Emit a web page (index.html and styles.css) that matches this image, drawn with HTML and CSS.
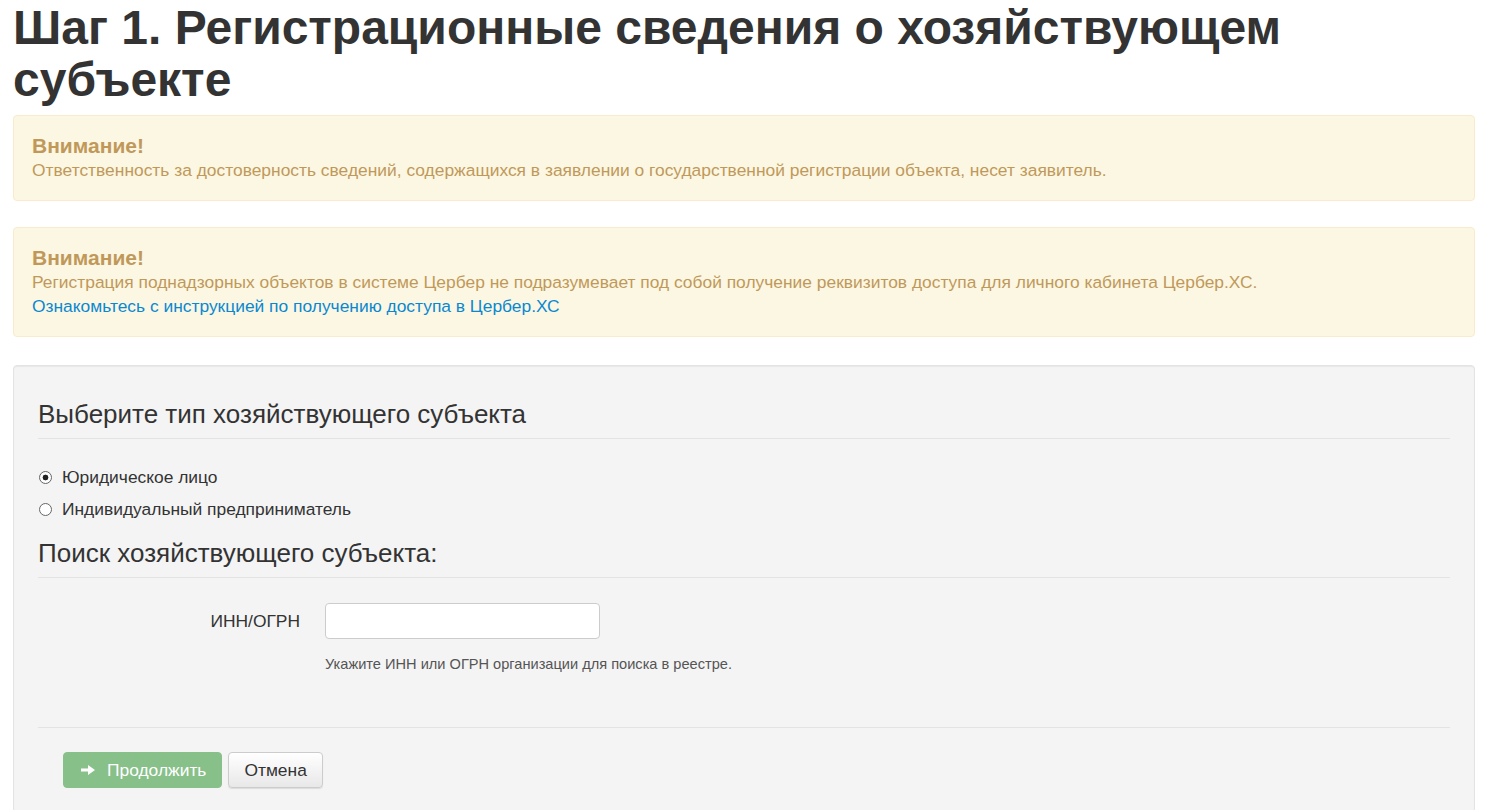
FILE: index.html
```html
<!DOCTYPE html>
<html lang="ru">
<head>
    <meta charset="UTF-8">
    <title>Шаг 1. Регистрационные сведения о хозяйствующем субъекте</title>
    <link rel="stylesheet" href="styles.css">
</head>
<body>
    <div class="page">
        <h1>Шаг 1. Регистрационные сведения о хозяйствующем субъекте</h1>

        <div class="alert">
            <strong class="alert-title">Внимание!</strong>
            Ответственность за достоверность сведений, содержащихся в заявлении о государственной регистрации объекта, несет заявитель.
        </div>

        <div class="alert">
            <strong class="alert-title">Внимание!</strong>
            Регистрация поднадзорных объектов в системе Цербер не подразумевает под собой получение реквизитов доступа для личного кабинета Цербер.ХС.<br>
            <a href="#">Ознакомьтесь с инструкцией по получению доступа в Цербер.ХС</a>
        </div>

        <form class="well">
            <div class="legend">Выберите тип хозяйствующего субъекта</div>
            <label class="radio"><input type="radio" name="type" checked> Юридическое лицо</label>
            <label class="radio"><input type="radio" name="type"> Индивидуальный предприниматель</label>

            <div class="legend second">Поиск хозяйствующего субъекта:</div>
            <div class="form-row">
                <label class="control-label" for="inn">ИНН/ОГРН</label>
                <input type="text" id="inn" class="text-input">
            </div>
            <div class="help">Укажите ИНН или ОГРН организации для поиска в реестре.</div>

            <div class="form-actions">
                <button type="button" class="btn btn-success" disabled>
                    <svg class="icon" width="14" height="12" viewBox="0 0 14 12"><path d="M0 4.5h7V1l7 5-7 5V7.5H0z" fill="#fff"/></svg>
                    Продолжить
                </button>
                <button type="button" class="btn">Отмена</button>
            </div>
        </form>
    </div>
</body>
</html>
```

FILE: styles.css
```css
body {
    margin: 0;
    font-family: "Liberation Sans", Arial, sans-serif;
    font-size: 17.4px;
    line-height: 24px;
    color: #333;
    background: #fff;
}
.page {
    padding: 0 13px;
}
h1 {
    font-size: 48px;
    line-height: 52px;
    font-weight: bold;
    margin: 2px 0 9px;
    color: #333;
}
.alert {
    background: #fcf7e3;
    border: 1px solid #faebcc;
    border-radius: 4px;
    padding: 18px;
    margin-bottom: 26px;
    color: #c0995a;
}
.alert-title {
    display: block;
    font-size: 21px;
}
.alert a {
    color: #0a88d0;
    text-decoration: none;
}
.well {
    background: #f4f4f4;
    border: 1px solid #e3e3e3;
    border-radius: 4px;
    box-shadow: inset 0 1px 1px rgba(0,0,0,0.05);
    padding: 28px 24px 24px;
    margin-top: 28px;
}
.legend {
    font-size: 26px;
    line-height: 40px;
    padding-bottom: 4px;
    border-bottom: 1px solid #e3e3e3;
    margin-bottom: 22px;
}
.legend.second {
    margin-top: 8px;
    margin-bottom: 25px;
}
.radio {
    display: flex;
    align-items: center;
    height: 32px;
}
.radio input {
    appearance: none;
    width: 13px;
    height: 13px;
    margin: 0 10px 0 1px;
    border: 1px solid #666;
    border-radius: 50%;
    background: #fff;
}
.radio input:checked {
    background: radial-gradient(circle, #222 0 2.6px, #fff 3.2px);
}
.form-row {
    display: grid;
    grid-template-columns: 262px 275px;
    column-gap: 25px;
    align-items: center;
}
.control-label {
    text-align: right;
}
.text-input {
    height: 36px;
    box-sizing: border-box;
    border: 1px solid #ccc;
    border-radius: 4px;
    background: #fff;
    font: inherit;
    padding: 4px 8px;
}
.help {
    margin: 15px 0 0 287px;
    font-size: 14.6px;
    line-height: 20px;
    color: #555;
}
.form-actions {
    border-top: 1px solid #e3e3e3;
    margin-top: 53px;
    padding: 24px 25px 0;
    display: flex;
    gap: 6px;
}
.btn {
    height: 36px;
    padding: 0 15px;
    font-family: inherit;
    font-size: 17.4px;
    color: #333;
    background: linear-gradient(#fff, #e8e8e8);
    border: 1px solid #ccc;
    border-radius: 4px;
    box-shadow: 0 1px 1px rgba(0,0,0,0.1);
    display: flex;
    align-items: center;
}
.btn-success {
    background: #88c08a;
    border-color: #88c08a;
    color: #fff;
    padding: 0 15px 0 17px;
    box-shadow: none;
}
.btn-success .icon {
    margin-right: 12px;
}
```
